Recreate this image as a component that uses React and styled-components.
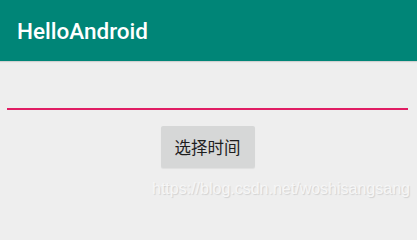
import React from "react";
import styled, { createGlobalStyle } from "styled-components";

const Global = createGlobalStyle`
  html, body { margin: 0; padding: 0; }
  body { background: #eeeeee; font-family: Roboto, "Noto Sans CJK SC", sans-serif; }
  #root { width: 417px; height: 206px; overflow: hidden; }
`;

const Screen = styled.div`
  width: 417px;
  height: 206px;
  background: #eeeeee;
  display: flex;
  flex-direction: column;
  position: relative;
`;

const AppBar = styled.header`
  height: 61px;
  background: #008577;
  display: flex;
  align-items: center;
  padding-left: 17px;
  box-shadow: 0 1px 1px rgba(0, 0, 0, 0.12);
  flex-shrink: 0;
`;

const Title = styled.h1`
  margin: 0;
  color: #ffffff;
  font-family: Roboto, sans-serif;
  font-weight: 500;
  font-size: 22.5px;
  line-height: 1;
  padding-top: 1px;
`;

const Content = styled.main`
  display: flex;
  flex-direction: column;
  align-items: center;
  padding: 0 9px 0 7px;
`;

const Field = styled.div`
  align-self: stretch;
  height: 2px;
  margin-top: 47px;
  background: #e01d63;
`;

const Button = styled.button`
  margin-top: 16px;
  width: 94px;
  height: 42px;
  border: none;
  border-radius: 2px;
  background: #d6d7d7;
  color: #1e1e1e;
  font-family: "Noto Sans CJK SC", sans-serif;
  font-size: 16.5px;
  padding: 0;
  box-shadow: 0 1px 1px rgba(0, 0, 0, 0.06);
`;

const Watermark = styled.div`
  position: absolute;
  left: 152px;
  top: 179px;
  font-family: "Liberation Sans", Arial, sans-serif;
  font-size: 16px;
  line-height: 19px;
  color: #f6f6f6;
  text-shadow: 1px 1px 1px rgba(0, 0, 0, 0.12);
  white-space: nowrap;
`;

export default function App() {
  return (
    <>
      <Global />
      <Screen>
        <AppBar>
          <Title>HelloAndroid</Title>
        </AppBar>
        <Content>
          <Field />
          <Button>选择时间</Button>
        </Content>
        <Watermark>https://blog.csdn.net/woshisangsang</Watermark>
      </Screen>
    </>
  );
}
